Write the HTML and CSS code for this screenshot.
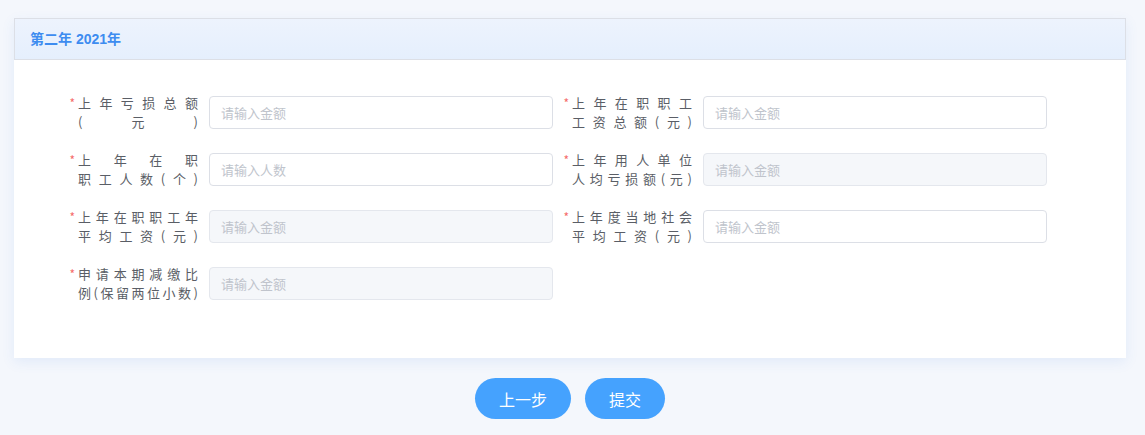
FILE: index.html
```html
<!DOCTYPE html>
<html lang="zh-CN">
<head>
  <meta charset="UTF-8" />
  <meta name="viewport" content="width=device-width, initial-scale=1.0" />
  <title>减缴申请</title>
  <link rel="stylesheet" href="styles.css">
</head>
<body>
  <div class="prev-card"></div>

  <div class="card">
    <div class="card-header">第二年 2021年</div>
    <div class="card-body">
      <div class="form-grid">
        <div class="form-item">
          <label class="form-label">
            <span class="star">*</span>
            <span class="label-text"><span class="line">上年亏损总额</span><span class="line">(元)</span></span>
          </label>
          <input class="form-input" type="text" placeholder="请输入金额" />
        </div>
        <div class="form-item">
          <label class="form-label">
            <span class="star">*</span>
            <span class="label-text"><span class="line">上年在职职工</span><span class="line">工资总额(元)</span></span>
          </label>
          <input class="form-input" type="text" placeholder="请输入金额" />
        </div>

        <div class="form-item">
          <label class="form-label">
            <span class="star">*</span>
            <span class="label-text"><span class="line">上年在职</span><span class="line">职工人数(个)</span></span>
          </label>
          <input class="form-input" type="text" placeholder="请输入人数" />
        </div>
        <div class="form-item">
          <label class="form-label">
            <span class="star">*</span>
            <span class="label-text"><span class="line">上年用人单位</span><span class="line">人均亏损额(元)</span></span>
          </label>
          <input class="form-input" type="text" placeholder="请输入金额" disabled />
        </div>

        <div class="form-item">
          <label class="form-label">
            <span class="star">*</span>
            <span class="label-text"><span class="line">上年在职职工年</span><span class="line">平均工资(元)</span></span>
          </label>
          <input class="form-input" type="text" placeholder="请输入金额" disabled />
        </div>
        <div class="form-item">
          <label class="form-label">
            <span class="star">*</span>
            <span class="label-text"><span class="line">上年度当地社会</span><span class="line">平均工资(元)</span></span>
          </label>
          <input class="form-input" type="text" placeholder="请输入金额" />
        </div>

        <div class="form-item">
          <label class="form-label">
            <span class="star">*</span>
            <span class="label-text"><span class="line">申请本期减缴比</span><span class="line tight">例(保留两位小数)</span></span>
          </label>
          <input class="form-input" type="text" placeholder="请输入金额" disabled />
        </div>
      </div>
    </div>
  </div>

  <div class="actions">
    <button class="btn btn-prev">上一步</button>
    <button class="btn btn-submit">提交</button>
  </div>
</body>
</html>
```

FILE: styles.css
```css
body {
  margin: 0;
  background-color: #f4f7fc;
  font-family: "Noto Sans CJK SC", "Noto Sans", sans-serif;
  color: #606266;
  overflow: hidden;
}
.prev-card {
  height: 0;
  margin: 0 19px 0 14px;
  box-shadow: 0 2px 12px rgba(64, 120, 200, 0.12);
}
.card {
  margin: 18px 19px 0 14px;
  background: #fff;
  box-shadow: 0 4px 12px rgba(64, 130, 230, 0.1);
}
.card-header {
  height: 40px;
  line-height: 40px;
  padding-left: 15px;
  border: 1px solid #dcdfe6;
  background: linear-gradient(#edf3fd, #e5effd);
  color: #3d8cf0;
  font-size: 14px;
  font-weight: bold;
  font-family: "Liberation Sans", "Noto Sans CJK SC", sans-serif;
}
.card-body {
  padding: 33px 0 56px 45px;
}
.form-grid {
  display: grid;
  grid-template-columns: 494px 494px;
  row-gap: 19px;
}
.form-item {
  display: flex;
  align-items: center;
}
.form-label {
  width: 150px;
  box-sizing: border-box;
  padding-right: 11px;
  display: flex;
  justify-content: flex-end;
  align-items: flex-start;
}
.star {
  color: #f56c6c;
  font-size: 12px;
  line-height: 20px;
  margin-right: 3px;
}
.label-text {
  width: 120px;
  font-size: 13px;
  line-height: 19px;
  letter-spacing: 4px;
  color: #5a5e66;
}
.line {
  display: block;
  white-space: nowrap;
  text-align: justify;
  text-align-last: justify;
  margin-right: -4px;
}
.line.tight {
  letter-spacing: 1px;
  margin-right: -1px;
}
.form-input {
  width: 344px;
  height: 33px;
  box-sizing: border-box;
  padding: 0 11px;
  border: 1px solid #dcdfe6;
  border-radius: 4px;
  background: #fff;
  font-size: 13px;
  font-family: "Noto Sans CJK SC", sans-serif;
  color: #606266;
  outline: none;
}
.form-input::placeholder {
  color: #c0c4cc;
}
.form-input:disabled {
  background: #f5f7fa;
  border-color: #e4e7ed;
}
.actions {
  display: flex;
  justify-content: center;
  gap: 14px;
  margin: 20px 19px 0 14px;
}
.btn {
  height: 41px;
  border: none;
  border-radius: 21px;
  background-color: #45a2fe;
  color: #fff;
  font-size: 16px;
  font-family: "Noto Sans CJK SC", sans-serif;
  cursor: pointer;
}
.btn-prev {
  width: 96px;
}
.btn-submit {
  width: 80px;
}
```
